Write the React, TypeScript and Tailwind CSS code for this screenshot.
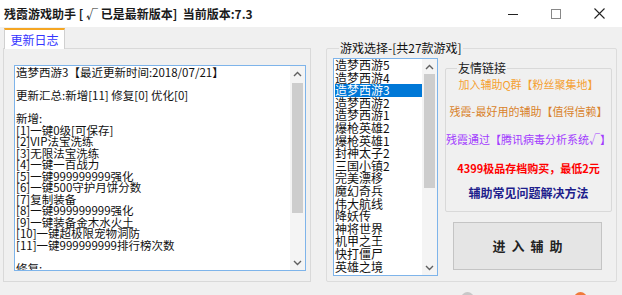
import React from 'react';

const logLines = [
  '造梦西游3【最近更新时间:2018/07/21】',
  '',
  '更新汇总:新增[11] 修复[0] 优化[0]',
  '',
  '新增:',
  '[1]一键0级[可保存]',
  '[2]VIP法宝洗练',
  '[3]无限法宝洗练',
  '[4]一键一百战力',
  '[5]一键999999999强化',
  '[6]一键500守护月饼分数',
  '[7]复制装备',
  '[8]一键999999999强化',
  '[9]一键装备金木水火土',
  '[10]一键超极限宠物洞防',
  '[11]一键999999999排行榜次数',
  '',
  '修复:',
];

const games = [
  '造梦西游5',
  '造梦西游4',
  '造梦西游3',
  '造梦西游2',
  '造梦西游1',
  '爆枪英雄2',
  '爆枪英雄1',
  '封神太子2',
  '三国小镇2',
  '完美漂移',
  '魔幻奇兵',
  '伟大航线',
  '降妖传',
  '神将世界',
  '机甲之王',
  '快打僵尸',
  '英雄之境',
];

// little chevrons used by the fake scrollbars
function Chevron({ up }: { up?: boolean }) {
  return (
    <svg width="9" height="6" viewBox="0 0 9 6" className="block">
      <path
        d={up ? 'M1 5 L4.5 1.5 L8 5' : 'M1 1 L4.5 4.5 L8 1'}
        fill="none"
        stroke="#606060"
        strokeWidth="1.4"
      />
    </svg>
  );
}

function ScrollBar({ thumbTop, thumbHeight }: { thumbTop: number; thumbHeight: number }) {
  return (
    <div className="w-[15px] h-full bg-[#f4f4f4] flex flex-col items-center shrink-0">
      <div className="h-[15px] flex items-center justify-center">
        <Chevron up />
      </div>
      <div className="flex-1 w-full px-[2px]">
        <div className="w-full bg-[#cdcdcd]" style={{ marginTop: thumbTop, height: thumbHeight }} />
      </div>
      <div className="h-[15px] flex items-center justify-center">
        <Chevron />
      </div>
    </div>
  );
}

export default function App() {
  return (
    <div className="w-[622px] h-[295px] bg-[#f0f0f0] overflow-hidden flex flex-col font-['Noto_Sans_CJK_SC','Noto_Sans',sans-serif] text-[12px] text-black">
      {/* Title bar */}
      <div className="h-[27px] bg-white flex items-center pl-[4px] shrink-0">
        <span className="font-bold text-[12px] text-[#1a1a1a] whitespace-pre">残霞游戏助手 [ √ 已是最新版本]  当前版本:7.3</span>
        <div className="ml-auto flex items-center">
          <div className="w-[46px] h-[27px] flex items-center justify-center">
            <svg width="10" height="10" viewBox="0 0 10 10">
              <path d="M0 5.5 H10" stroke="#222" strokeWidth="1" />
            </svg>
          </div>
          <div className="w-[40px] h-[27px] flex items-center justify-center">
            <svg width="10" height="10" viewBox="0 0 10 10">
              <rect x="0.5" y="0.5" width="9" height="9" fill="none" stroke="#888" strokeWidth="1" />
            </svg>
          </div>
          <div className="w-[46px] h-[27px] flex items-center justify-center">
            <svg width="11" height="11" viewBox="0 0 11 11">
              <path d="M0.5 0.5 L10.5 10.5 M10.5 0.5 L0.5 10.5" stroke="#222" strokeWidth="1.1" />
            </svg>
          </div>
        </div>
      </div>

      <div className="flex pl-[3px]">
        {/* Left: tab + update log */}
        <div className="w-[308px] flex flex-col">
          <div className="h-[21px] flex items-end">
            <div className="ml-[1px] w-[61px] h-[21px] bg-white border-t-2 border-t-[#f5a623] border-x border-x-[#d0d0d0] flex items-center justify-center text-[#3434ff] text-[12px] relative -mb-[1px] z-10">
              更新日志
            </div>
          </div>
          <div className="h-[234px] border border-[#d9d9d9] bg-[#f0f0f0] pl-[10px] pt-[16px]">
            <div className="w-[292px] h-[206px] border border-[#7eb4ea] bg-white flex">
              <div className="flex-1 overflow-hidden pl-[1px] pt-[1px] text-[11.5px] leading-[11.5px] whitespace-pre text-[#111]">
                {logLines.map((line, i) => (
                  <div key={i} className="h-[11.5px]">
                    {line}
                  </div>
                ))}
              </div>
              <ScrollBar thumbTop={2} thumbHeight={130} />
            </div>
          </div>
        </div>

        {/* Right: game select group */}
        <div className="ml-[15px] mt-[21px] w-[291px] h-[234px] border border-[#dcdcdc] rounded-[2px] relative flex pl-[6px] pt-[9px]">
          <span className="absolute -top-[9px] left-[12px] px-[1px] bg-[#f0f0f0] text-[12px] leading-[16px] text-[#111]">
            游戏选择-[共27款游戏]
          </span>

          <div className="w-[105px] h-[218px] border border-[#7eb4ea] bg-white flex">
            <div className="flex-1 overflow-hidden pl-[1px] text-[12px] leading-[12.6px] whitespace-nowrap text-[#111]">
              {games.map((g) => (
                <div
                  key={g}
                  className={g === '造梦西游3' ? 'h-[12.6px] bg-[#0078d7] text-white' : 'h-[12.6px]'}
                >
                  {g}
                </div>
              ))}
            </div>
            <ScrollBar thumbTop={0} thumbHeight={114} />
          </div>

          <div className="ml-[7px] flex flex-col">
            {/* Friend links */}
            <div className="mt-[10px] w-[167px] h-[144px] border border-[#d9d9d9] rounded-[2px] relative flex flex-col items-center text-[11px] leading-[16px]">
              <span className="absolute -top-[9px] left-[11px] px-[1px] bg-[#f0f0f0] text-[12px] leading-[16px] text-[#222]">
                友情链接
              </span>
              <div className="mt-[7px] text-[#f5a030]">加入辅助Q群【粉丝聚集地】</div>
              <div className="mt-[11px] text-[#d9822b]">残霞-最好用的辅助【值得信赖】</div>
              <div className="mt-[12px] text-[#a23cff]">残霞通过【腾讯病毒分析系统√】</div>
              <div className="mt-[13px] text-[#ff0000] font-bold">4399极品存档购买，最低2元</div>
              <div className="mt-[9px] text-[#1e1e8c] font-bold text-[12px]">辅助常见问题解决方法</div>
            </div>

            <button className="ml-[8px] mt-[10px] w-[149px] h-[48px] bg-[#e5e5e5] border border-[#c4c4c4] flex items-center justify-center font-bold text-[13px] tracking-[6px] text-[#222] pl-[6px]">
              进入辅助
            </button>
          </div>
        </div>
      </div>

      {/* Bottom strip with partially visible icons */}
      <div className="flex-1 overflow-hidden flex">
        <div className="ml-[461px] mt-[10px] w-[13px] h-[13px] rounded-full bg-[#c8c8c8] shrink-0" />
        <div className="ml-[100px] mt-[10px] w-[13px] h-[13px] rounded-full bg-[#f07a3a] shrink-0" />
      </div>
    </div>
  );
}
